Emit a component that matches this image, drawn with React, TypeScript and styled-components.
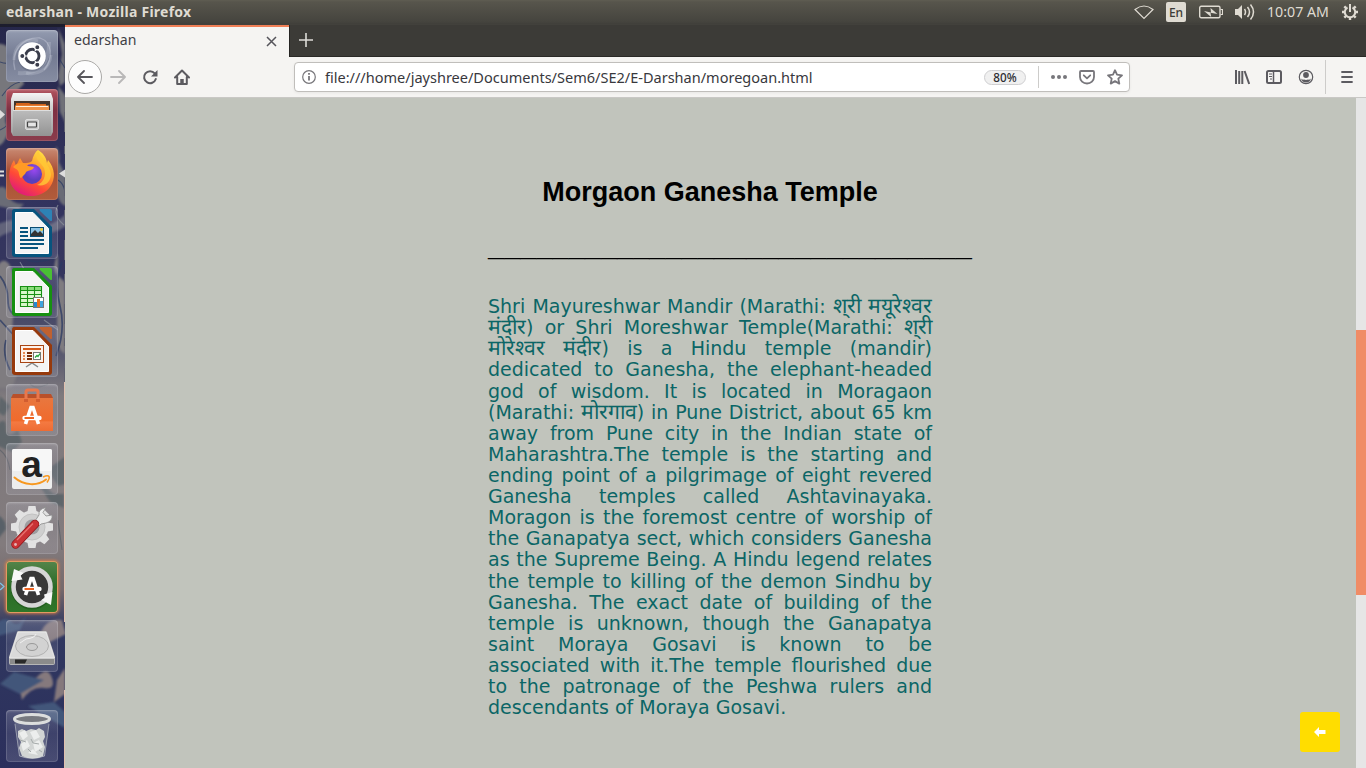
import React from "react";
import styled, { createGlobalStyle } from "styled-components";

const Global = createGlobalStyle`
  html, body { margin: 0; padding: 0; }
  body { width: 1366px; height: 768px; overflow: hidden; }
  * { box-sizing: border-box; }
  svg { display: block; flex: none; }
`;

const ui = `"Noto Sans", "Open Sans", sans-serif`;

const Desktop = styled.div`
  width: 1366px;
  height: 768px;
  display: flex;
  flex-direction: column;
  overflow: hidden;
  font-family: ${ui};
`;
const TopPanel = styled.header`
  height: 24px;
  flex: none;
  display: flex;
  align-items: center;
  justify-content: space-between;
  padding: 0 7px 0 6px;
  background: linear-gradient(#5f5d52 0, #57554c 2px, #45443e 22px, #403f3a 24px);
  color: #dfdbd2;
`;
const WindowTitle = styled.div`
  font-size: 14px;
  font-weight: 700;
  letter-spacing: 0.26px;
  line-height: 24px;
  white-space: nowrap;
`;
const Indicators = styled.div`
  display: flex;
  align-items: center;
  height: 24px;
`;
const Indicator = styled.div<{ $gap: number }>`
  margin-left: ${(p) => p.$gap}px;
`;
const LanguageBadge = styled.div`
  width: 20px;
  height: 20px;
  margin-left: 12px;
  border-radius: 2px;
  background: #dfdbd2;
  color: #3c3b37;
  font-size: 12px;
  font-weight: 500;
  line-height: 21px;
  text-align: center;
`;
const Clock = styled.div`
  width: 63px;
  margin-left: 12px;
  font-size: 14.2px;
  line-height: 24px;
  white-space: nowrap;
`;
const Workspace = styled.div`
  flex: 1;
  display: flex;
  min-height: 0;
`;
const Launcher = styled.nav`
  position: relative;
  width: 65px;
  flex: none;
  background: #2f3056;
  overflow: hidden;
`;
const Wallpaper = styled.svg`
  position: absolute;
  left: 0;
  top: 0;
`;
const Dock = styled.div`
  position: relative;
  height: 744px;
  padding: 6px 7px 6px 6px;
  display: flex;
  flex-direction: column;
  gap: 7px;
`;
const Tile = styled.div<{ $bg: string; $active?: boolean; $last?: boolean }>`
  width: 52px;
  height: 52px;
  flex: none;
  border-radius: 4px;
  background: ${(p) => p.$bg};
  box-shadow: ${(p) =>
    p.$active
      ? "inset 0 0 0 1px #e39a62, 0 0 3px 1px rgba(233,130,70,.75)"
      : "inset 0 0 0 1px rgba(255,255,255,.13), inset 0 2px 2px rgba(255,255,255,.13)"};
  margin-top: ${(p) => (p.$last ? "auto" : "0")};
`;
const Browser = styled.main`
  flex: 1;
  min-width: 0;
  display: flex;
  flex-direction: column;
`;
const TabStrip = styled.div`
  height: 33px;
  flex: none;
  display: flex;
  background: #3c3b37;
  border-top: 1px solid #42413c;
  box-shadow: inset 0 -1px 0 #2a2926;
`;
const Tab = styled.div`
  width: 224px;
  height: 32px;
  display: flex;
  align-items: center;
  justify-content: space-between;
  padding: 0 12px 2px 9px;
  border-top: 2px solid #f07f56;
  background: #f5f4f2;
  color: #3f3f45;
  font-size: 14.1px;
`;
const TabTitle = styled.span`
  line-height: 20px;
  padding-bottom: 2px;
`;
const NewTab = styled.div`
  width: 34px;
  padding: 0 0 2px 9px;
  border-left: 1px solid #252422;
  display: flex;
  align-items: center;
`;
const NavBar = styled.div`
  height: 41px;
  flex: none;
  display: flex;
  align-items: center;
  background: #f5f4f2;
  border-bottom: 1px solid #c9c8c5;
  padding: 0 0 0 3px;
`;
const BackButton = styled.div`
  width: 34px;
  height: 34px;
  flex: none;
  border: 1px solid #aaa9a7;
  border-radius: 50%;
  background: #fdfdfd;
  display: flex;
  align-items: center;
  justify-content: center;
`;
const ToolIcon = styled.div<{ $gap: number }>`
  flex: none;
  margin-left: ${(p) => p.$gap}px;
  width: 16px;
  height: 16px;
`;
const AddressBar = styled.div`
  width: 836px;
  height: 30px;
  flex: none;
  margin-left: 104px;
  padding: 0 6px 0 6px;
  display: flex;
  align-items: center;
  background: #fff;
  border: 1px solid #c0bebb;
  border-radius: 4px;
  box-shadow: 0 1px 3px rgba(0, 0, 0, 0.06);
`;
const Url = styled.div`
  margin-left: 8px;
  flex: 1;
  font-size: 14.53px;
  line-height: 28px;
  color: #38383d;
  white-space: nowrap;
`;
const ZoomChip = styled.div`
  width: 42px;
  height: 15px;
  border: 1px solid #cfcfd1;
  border-radius: 8px;
  background: #f0f0f0;
  font-size: 11.7px;
  font-weight: 500;
  line-height: 13px;
  text-align: center;
  color: #2c2c30;
`;
const Divider = styled.div<{ $h: number; $gap: number }>`
  width: 1px;
  flex: none;
  height: ${(p) => p.$h}px;
  margin-left: ${(p) => p.$gap}px;
  background: #cdccca;
`;
const Viewport = styled.div`
  flex: 1;
  min-height: 0;
  display: flex;
`;
const Page = styled.section`
  position: relative;
  flex: 1;
  background: #c1c4bc;
  padding: 78px 1px 0 0;
  display: flex;
  flex-direction: column;
  align-items: center;
`;
const Heading = styled.h1`
  margin: 0;
  font: 700 27px/32px "Liberation Sans", Arial, sans-serif;
  color: #000;
`;
const Column = styled.div`
  width: 444px;
`;
const Rule = styled.div`
  margin-top: 19px;
  height: 33px;
  font: 32.26px/33px "Liberation Serif", "Times New Roman", serif;
  color: #000;
  white-space: nowrap;
  transform: translateY(0.6px) scaleY(0.75);
  transform-origin: 0 31px;
`;
const Article = styled.div`
  margin-top: 36.12px;
  font: 19px/21.12px "DejaVu Sans", sans-serif;
  color: #0b6666;
`;
const Line = styled.div<{ $end?: boolean }>`
  height: 21.12px;
  white-space: nowrap;
  text-align: ${(p) => (p.$end ? "left" : "justify")};
  text-align-last: ${(p) => (p.$end ? "left" : "justify")};
`;
const Marathi = styled.span`
  font-size: 21.2px;
  font-weight: 300;
  line-height: 0;
`;
const BackToTop = styled.div`
  position: absolute;
  right: 16px;
  bottom: 16px;
  width: 40px;
  height: 40px;
  border-radius: 3px;
  background: #fd0;
  display: flex;
  align-items: center;
  justify-content: center;
`;
const ScrollTrack = styled.div`
  width: 10px;
  background: #e6e6e6;
  padding-top: 232px;
`;
const ScrollThumb = styled.div`
  height: 265px;
  background: #f08c66;
`;

const lines = [
  "Shri Mayureshwar Mandir (Marathi: श्‌री मयूरेश्‍वर",
  "मंदीर) or Shri Moreshwar Temple(Marathi: श्‌री",
  "मोरेश्‍वर मंदीर) is a Hindu temple (mandir)",
  "dedicated to Ganesha, the elephant-headed",
  "god of wisdom. It is located in Moragaon",
  "(Marathi: मोरगाव) in Pune District, about 65 km",
  "away from Pune city in the Indian state of",
  "Maharashtra.The temple is the starting and",
  "ending point of a pilgrimage of eight revered",
  "Ganesha temples called Ashtavinayaka.",
  "Moragon is the foremost centre of worship of",
  "the Ganapatya sect, which considers Ganesha",
  "as the Supreme Being. A Hindu legend relates",
  "the temple to killing of the demon Sindhu by",
  "Ganesha. The exact date of building of the",
  "temple is unknown, though the Ganapatya",
  "saint Moraya Gosavi is known to be",
  "associated with it.The temple flourished due",
  "to the patronage of the Peshwa rulers and",
  "descendants of Moraya Gosavi.",
];

const withMarathi = (text: string) =>
  text
    .split(/([\u0900-\u097F\u200C\u200D]+)/)
    .map((part, i) => (i % 2 ? <Marathi key={i}>{part}</Marathi> : part));

const Art = ({ children }: { children: React.ReactNode }) => (
  <svg width="52" height="52" viewBox="0 0 52 52">{children}</svg>
);

const Ubuntu = () => (
  <Art>
    <g fill="none" stroke="#dfe4ee" strokeOpacity=".32" strokeWidth="1.3">
      <path d="M9 40C4 22 16 7 34 8C46 12 48 28 38 40" />
      <path d="M43 12C44 34 30 45 12 43" strokeOpacity=".2" strokeWidth="4" />
      <path d="M8 30C8 15 20 7 32 11M45 25C44 40 30 46 20 43" strokeOpacity=".22" strokeWidth="3" />
    </g>
    <circle cx="26" cy="27.500" r="14" fill="#555c70" opacity=".4" />
    <circle cx="26" cy="26" r="13.8" fill="#fff" />
    <circle cx="26.3" cy="26" r="6.700" fill="none" stroke="#3a3d4b" strokeWidth="2.900" />
    <g stroke="#fff" strokeWidth="1.2" fill="#3a3d4b">
      <path d="M18 26h4M31.500 17l-2.500 4M31.500 35L29 31" />
      <circle cx="16.300" cy="26" r="2.600" /><circle cx="31.300" cy="17.2" r="2.600" /><circle cx="31.300" cy="34.8" r="2.600" />
    </g>
  </Art>
);
const Files = () => (
  <Art>
    <defs>
      <linearGradient id="cab" x2="0" y2="1"><stop stopColor="#bcbcbc" /><stop offset=".3" stopColor="#b0b0b0" /><stop offset="1" stopColor="#939393" /></linearGradient>
      <linearGradient id="cabTop" x2="0" y2="1"><stop stopColor="#f4f4f4" /><stop offset=".3" stopColor="#d2d2d2" /><stop offset="1" stopColor="#9c9c9c" /></linearGradient>
    </defs>
    <path d="M7 4h38l2 6v33l-2 4H7l-2-4V10z" fill="url(#cabTop)" />
    <path d="M8 12h36v10H8z" fill="#43352c" />
    <path d="M10 14h13l2 1h15v6H10z" fill="#d5641b" />
    <path d="M9 16.500h34V21H9z" fill="#f0954a" />
    <path d="M10 17.500h32" stroke="#fff3e0" strokeWidth="1" />
    <path d="M7 21h38v26H7z" fill="url(#cab)" />
    <path d="M7 21.500h38" stroke="#dedede" />
    <rect x="19.500" y="30.500" width="13" height="10" rx="1.5" fill="#c8c8c8" stroke="#dedede" />
    <rect x="21.5" y="33" width="9" height="5" rx=".5" fill="#e5e5e5" stroke="#444" strokeWidth="1.2" />
  </Art>
);
const Firefox = () => (
  <Art>
    <defs>
      <linearGradient id="ff" x1=".85" y1="0" x2=".3" y2="1"><stop stopColor="#fff04a" /><stop offset=".38" stopColor="#ffa02c" /><stop offset=".7" stopColor="#ff4a36" /><stop offset="1" stopColor="#e0187d" /></linearGradient>
      <radialGradient id="fp" cx=".6" cy=".3"><stop stopColor="#9a48f0" /><stop offset="1" stopColor="#5b3fbc" /></radialGradient>
    </defs>
    <path d="M32 2C37 5 40 9 41 15L42 12C49 20 50 31 44 39C36 50 19 51 9 42C1 34 2 21 8 12L10 18L14 10L17 15C21 15 24 15 26 13C27 8 29 4 32 2Z" fill="url(#ff)" />
    <circle cx="26" cy="26" r="10" fill="url(#fp)" />
    <path d="M7 19C13 13 19 14 22 18L28 19C27 23 22 22 20 24C20 25 18 27 16 29C15 31 14 30 13 26C13 22 10 21 7 19Z" fill="#ff9b25" />
    <path d="M32 3C27 11 35 14 38 20C41 28 37 35 31 37C40 39 45 33 45 26C44 17 38 15 32 3Z" fill="#ffc936" opacity=".8" />
  </Art>
);
const Sheet = ({ dark, light, children }: { dark: string; light: string; children: React.ReactNode }) => (
  <Art>
    <path d="M8 2H28L46 20V47q0 3-3 3H9q-3 0-3-3V5q0-3 2-3z" fill={dark} />
    <path d="M34 2H44q2 0 2 2V13.500q-1 1-2 0L34 4q-1-1 0-2z" fill={light} />
    <path d="M9.500 5.500H27L42.500 21.500V46.500H9.500z" fill="#f4f4f4" stroke="#fff" strokeWidth="1" />
    {children}
  </Art>
);
const Writer = () => (
  <Sheet dark="#07547e" light="#2d82b5">
    <path d="M14 21h8M14 25h8M14 29h8M14 33h24M14 37h24M14 41h18" stroke="#07547e" strokeWidth="2" />
    <rect x="24.500" y="20.500" width="13" height="9" fill="#8cc4e5" stroke="#0a4d73" />
    <path d="M25 29v-2l4-4 3 3 2-2 3 3v2z" fill="#333" /><circle cx="35.500" cy="22.5" r="1.4" fill="#f3cc35" />
  </Sheet>
);
const Calc = () => (
  <Sheet dark="#169011" light="#49bf34">
    <rect x="14" y="20" width="22" height="21" fill="#d9f8cc" />
    <path d="M14 20h22v4H14z" fill="#8cdd7c" />
    <path d="M14.500 20.500h21v20h-21zM14 24.500h22M14 28.500h22M14 32.500h22M14 36.500h22M21.500 20v21M28.500 20v21" fill="none" stroke="#189014" strokeWidth="1.1" />
    <rect x="27.500" y="31.500" width="10" height="10" fill="#fff" stroke="#777" />
    <path d="M28 36h3v5h-3z" fill="#248bd0" /><path d="M31 33h3v8h-3z" fill="#e8721d" /><path d="M34 35h3v6h-3z" fill="#3fa3de" />
  </Sheet>
);
const Impress = () => (
  <Sheet dark="#96390c" light="#bf6130">
    <path d="M20 42l6-4 6 4" fill="none" stroke="#888" strokeWidth="1.5" />
    <rect x="14.5" y="20.500" width="23" height="17" fill="#fdf2eb" stroke="#a84514" />
    <path d="M17 24h18" stroke="#d65a18" strokeWidth="2" />
    <path d="M17 28h2M17 31h2M17 34h2" stroke="#e78a54" strokeWidth="2" />
    <path d="M21 28h5M21 31h5M21 34h5" stroke="#7a2d08" strokeWidth="2" />
    <rect x="27.5" y="27.500" width="7" height="7" fill="#fff" stroke="#777" />
    <path d="M29 32.500l2-2 1 1 2-3" stroke="#24a33b" strokeWidth="1.3" fill="none" />
  </Sheet>
);
const LetterMark = () => (
  <g fill="none" stroke="#fff">
    <path d="M19.500 40L25 23.500H27L32.500 40" strokeWidth="3.600" />
    <path d="M18.500 34H33.500" strokeWidth="4.400" strokeLinecap="round" />
    <path d="M18.500 34H28" stroke="#ef5c16" strokeWidth="1.900" />
  </g>
);
const Software = () => (
  <Art>
    <defs><linearGradient id="bag" x2="0" y2="1"><stop stopColor="#e8773f" /><stop offset=".7" stopColor="#f06a2c" /><stop offset=".72" stopColor="#f47a42" /><stop offset="1" stopColor="#ee6c33" /></linearGradient></defs>
    <path d="M7 10h38l2 4H5z" fill="#b9502a" />
    <path d="M5 14h42v33H5z" fill="url(#bag)" />
    <path d="M20 17V8q0-2 2-2h8q2 0 2 2v9" fill="none" stroke="#e9774b" strokeWidth="3" />
    <path d="M18 15h4v3h-4zM30 15h4v3h-4z" fill="#d25d30" />
    <LetterMark />
  </Art>
);
const Amazon = () => (
  <Art>
    <rect x="6" y="6" width="40" height="40" rx="2" fill="#ededed" />
    <rect x="6" y="6" width="40" height="22" rx="2" fill="#f7f7f7" />
    <text x="25.500" y="34" textAnchor="middle" fontFamily="Liberation Sans" fontWeight="700" fontSize="37" fill="#222">a</text>
    <path d="M8.500 34.500C18 43 32 43 40 36.500" fill="none" stroke="#f79820" strokeWidth="2" strokeLinecap="round" />
    <path d="M37 34q5-2 6-.5t-2 6" fill="none" stroke="#f79820" strokeWidth="1.6" />
  </Art>
);
const teeth = [0, 45, 90, 135, 180, 225, 270, 315];
const Settings = () => (
  <Art>
    <g fill="#e2e2e2">
      {teeth.map((a) => (
        <path key={a} d="M21 12L22.500 4h7L31 12z" transform={`rotate(${a} 26 25)`} />
      ))}
      <circle cx="26" cy="25" r="16.500" />
    </g>
    <circle cx="26" cy="25" r="13" fill="#cfcfcf" stroke="#c2c2c2" /><circle cx="26" cy="25" r="7.500" fill="#9d9da0" />
    <path d="M29 19L33 13q-1-6 7-7.500l-3 5 3 3.500 6-1q1 6-6 8l-5 1-4 4z" fill="#ececec" stroke="#8b8b8b" strokeWidth=".8" />
    <path d="M9.500 42.500L29 22" stroke="#8d171b" strokeWidth="8.500" strokeLinecap="round" />
    <path d="M9.500 42.500L29 22" stroke="#c93235" strokeWidth="7" strokeLinecap="round" />
    <path d="M11 38L27 21.500" stroke="#e8716f" strokeWidth="1.3" /><circle cx="9.500" cy="42.500" r="1.4" fill="#e4b4b4" />
  </Art>
);
const Updater = () => (
  <Art>
    <circle cx="26" cy="27.500" r="21" fill="#0f3a0d" opacity=".35" />
    <circle cx="26" cy="26" r="18.500" fill="#383838" stroke="#d6d6d6" strokeWidth="4.600" />
    <path d="M5.500 20L8 8l9.500 4-3 2.500 2 4z" fill="#f8f8f8" />
    <path d="M46.500 31l-1.500 13-9.500-5 3.500-2-1-3.500z" fill="#f8f8f8" />
    <g transform="translate(0,-6)"><LetterMark /></g>
  </Art>
);
const Disk = () => (
  <Art>
    <path d="M11 12q0-1 2-1h26q2 0 2 1l8 25v6q0 2-2 2H5q-2 0-2-2v-6z" fill="#b6b6b6" />
    <path d="M12 12h28l8.500 26h-45z" fill="#dadada" stroke="#f0f0f0" strokeWidth=".7" />
    <path d="M4 39h44v5H4z" fill="#8b8b8b" /><path d="M9 39.500h12l-2 4H9z" fill="#292929" />
    <ellipse cx="26" cy="26" rx="16.500" ry="10.500" fill="#d2d2d2" stroke="#b2b2b2" />
    <ellipse cx="26" cy="27" rx="5.5" ry="3.5" fill="#cdcdcd" stroke="#999" />
    <path d="M30 14q-1 4-10 5l-6 4" fill="none" stroke="#f2f2f2" />
  </Art>
);
const Trash = () => (
  <Art>
    <path d="M8 9L13 46q13 5 26 0L44 9z" fill="#c8ced2" opacity=".22" />
    <path d="M12 21l4-2 4 2 5-2 5 1 3-2 5 3 1 6-2 4 2 6-2 9q-10 5-21 0l-3-8 2-6-3-5z" fill="#d2d5d4" />
    <path d="M13 23l6-3 3 6-5 4zM24 22l6-2 4 7-6 3zM15 34l6-4 3 6-7 5zM27 33l6-3 4 7-8 5zM22 43l5-4 5 6z" fill="#f1f2f1" opacity=".85" />
    <path d="M14 30l6 2M25 29l2 4 6 1M22 39l3 3M33 40l3 2" fill="none" stroke="#9da3a3" strokeWidth=".9" />
    <ellipse cx="26" cy="9" rx="17.500" ry="4.500" fill="#77797f" stroke="#dcdedd" strokeWidth="3" />
    <path d="M9 14l4.500 32M43 14l-4.500 32" stroke="#dce0e1" strokeOpacity=".45" />
    <path d="M13.500 46q12.500 4.500 25 0" fill="none" stroke="#dce0e1" strokeOpacity=".6" />
  </Art>
);

const WallpaperArt = () => (
  <Wallpaper width="65" height="744" viewBox="0 24 65 744">
    <defs>
      <linearGradient id="wp" x1="0" y1="24" x2="0" y2="768" gradientUnits="userSpaceOnUse">
        <stop stopColor="#26274a" /><stop offset=".22" stopColor="#32335e" /><stop offset=".34" stopColor="#35365e" />
        <stop offset=".45" stopColor="#5c5c70" /><stop offset=".5" stopColor="#7f7a7d" /><stop offset=".7" stopColor="#827b7d" />
        <stop offset=".76" stopColor="#75696c" /><stop offset=".81" stopColor="#303860" /><stop offset="1" stopColor="#2b2f5c" />
      </linearGradient>
      <filter id="soft" x="-20%" y="-5%" width="140%" height="110%"><feGaussianBlur stdDeviation="1.2" /></filter>
    </defs>
    <path d="M0 24h65v744H0z" fill="url(#wp)" />
    <g filter="url(#soft)">
      <path d="M-3 44Q8 42 14 56T24 84Q14 92 8 108T10 128Q4 146-3 146Z" fill="#77777b" />
      <path d="M58 28l4 26-4 22 2 10 5-4V44zM58 86l8 10v28l-6-12z" fill="#6f7178" />
      <path d="M56 146q5 8 3 16l7 14v30q-8-2-10-18zM-2 188q8-4 10 6t16 10l-6 6-20-4z" fill="#6b6c76" />
      <path d="M-2 224q20-8 34 0t34-10v12q-18 12-34 6t-34 6z" fill="#62647a" />
      <path d="M-3 268q4-10 10-6t8 28l-3 42q8 10 10 30l-10 26h-15zM58 254q-6 12-2 20l9 8v72q-10-6-8-26z" fill="#7f7c80" />
      <path d="M-2 424q8-8 8 4t12 2l4 12-10 10-14-6zM0 396l10 10-6 10-6-4zM52 466l14-10v28l-8 2-8-12zM36 480l18 14 10 0v14l-14-6z" fill="#566067" opacity=".8" />
      <path d="M-2 515q8 4 8 14l-8 10z" fill="#596068" />
      <path d="M62 620q-14-2-20 10t-18 14-10 14l12-6 16-6 24-12zM22 700q10-14 22-12t8-10-14-2-18 14zM65 668l-8 12-3 22 11-8z" fill="#85797d" />
      <path d="M-2 622q8-6 14 0t14-6l-6 14-22 6zM28 706l26-4 11 10v16l-20-12zM0 684l14-12 30 8-24 14z" fill="#43577a" />
    </g>
    <g fill="none" stroke="#2a3a63" strokeWidth="1.1" strokeOpacity=".75">
      <path d="M0 62q10 4 22-4M2 96q8-12 18-14M0 130q10-4 12-16M60 60l5 8M58 180q6 4 7 12" />
      <path d="M0 276q8 10 8 24t10 16M6 340q-4 14 4 30M62 262q-8 20-2 44t-4 50M0 320l18 20M24 256q6 10 30 2" strokeWidth="1.7" />
      <path d="M58 205q-6 10 6 20M20 262l8 14M44 320l14 10" stroke="#8a8f9a" />
      <path d="M30 384q6 6 18 0M0 450q8 6 10 20M58 520l4 30" stroke="#5d626a" />
    </g>
    <path d="M64.500 112v270" stroke="#5f606f" strokeDasharray="20 14 8 22" />
    <path d="M64.5 382v240M64.500 690v78" stroke="#e0bfae" />
    <path d="M0 24h65v3H0z" fill="#1c1c26" opacity=".8" />
    <path d="M0 110l5 4.5-5 4.5z" fill="#ddd" />
    <path d="M65 169.500l-6 4 6 4z" fill="#ddd" />
    <path d="M0 171.500h4M0 175.500h4" stroke="#ddd" strokeWidth="2" />
    <path d="M0 583l4 3.500-4 3.500" fill="none" stroke="#7cc6ee" strokeWidth="1.300" />
  </Wallpaper>
);

const glass = "linear-gradient(rgba(200,200,215,.24), rgba(170,170,190,.14) 45%, rgba(190,190,205,.2))";

const App = () => (
  <Desktop>
    <Global />
    <TopPanel>
      <WindowTitle>edarshan - Mozilla Firefox</WindowTitle>
      <Indicators>
        <svg width="20" height="16" viewBox="0 0 20 16" fill="none" stroke="#dfdbd2" strokeWidth="1.2"><path d="M1 5.500Q10-1.500 19 5.500L10 14.500Z" /></svg>
        <LanguageBadge>En</LanguageBadge>
        <Indicator $gap={13}>
          <svg width="24" height="14" viewBox="0 0 24 14"><rect x=".7" y="1.200" width="20.300" height="11.600" rx="1.500" fill="none" stroke="#dfdbd2" strokeWidth="1.400" /><path d="M21.500 4.500h2v5h-2" fill="none" stroke="#dfdbd2" strokeWidth="1.200" /><path d="M5 6l7 1.500-.5-4.500 7 6-7-1.200.7 4.200z" fill="#dfdbd2" /></svg>
        </Indicator>
        <Indicator $gap={12}>
          <svg width="20" height="18" viewBox="0 0 20 18" fill="none" stroke="#dfdbd2" strokeWidth="1.500"><path d="M0 6h3l4-4v14l-4-4H0z" fill="#dfdbd2" stroke="none" /><path d="M9.500 6q2 3 0 6M12.500 4q4 5 0 10M15.500 1.500q6 7.500 0 15" /></svg>
        </Indicator>
        <Clock>10:07 AM</Clock>
        <Indicator $gap={11}>
          <svg width="18" height="18" viewBox="0 0 18 18" fill="none" stroke="#dfdbd2"><path d="M6.500 4.500a5.200 5.200 0 1 0 5 0" strokeWidth="2" /><path d="M9 1v8" strokeWidth="2" /><path d="M1 9h2.500M14.500 9H17M3.300 3.300l1.700 1.700M14.700 3.300L13 5M3.300 14.700L5 13M14.700 14.700L13 13M9 14.500V17" strokeWidth="2.400" /></svg>
        </Indicator>
      </Indicators>
    </TopPanel>
    <Workspace>
      <Launcher>
        <WallpaperArt />
        <Dock>
          <Tile $bg="linear-gradient(#939bb0,#747b92 50%,#868da2)"><Ubuntu /></Tile>
          <Tile $bg="linear-gradient(#b35560,#7e2f42 40%,#8b3c4c)"><Files /></Tile>
          <Tile $bg="linear-gradient(#c98a72,#a94e35 45%,#b15c3b)"><Firefox /></Tile>
          <Tile $bg={glass}><Writer /></Tile>
          <Tile $bg={glass}><Calc /></Tile>
          <Tile $bg={glass}><Impress /></Tile>
          <Tile $bg={glass}><Software /></Tile>
          <Tile $bg={glass}><Amazon /></Tile>
          <Tile $bg={glass}><Settings /></Tile>
          <Tile $bg="linear-gradient(#55854b,#2b6a26 50%,#2f772a)" $active><Updater /></Tile>
          <Tile $bg={glass}><Disk /></Tile>
          <Tile $bg={glass} $last><Trash /></Tile>
        </Dock>
      </Launcher>
      <Browser>
        <TabStrip>
          <Tab>
            <TabTitle>edarshan</TabTitle>
            <svg width="11" height="11" viewBox="0 0 11 11" stroke="#55545a" strokeWidth="1.500"><path d="M1 1l9 9M10 1L1 10" /></svg>
          </Tab>
          <NewTab>
            <svg width="14" height="14" viewBox="0 0 14 14" stroke="#dddcd8" strokeWidth="1.600"><path d="M7 0v14M0 7h14" /></svg>
          </NewTab>
        </TabStrip>
        <NavBar>
          <BackButton>
            <svg width="16" height="16" viewBox="0 0 16 16" fill="none" stroke="#58575c" strokeWidth="1.800" strokeLinecap="round" strokeLinejoin="round"><path d="M15 8H1.500M7 2L1 8l6 6" /></svg>
          </BackButton>
          <ToolIcon $gap={8}><svg width="16" height="16" viewBox="0 0 16 16" fill="none" stroke="#b9b8b8" strokeWidth="1.800" strokeLinecap="round" strokeLinejoin="round"><path d="M1 8h13.500M9 2l6 6-6 6" /></svg></ToolIcon>
          <ToolIcon $gap={16}><svg width="16" height="16" viewBox="0 0 16 16"><path d="M12.700 4.300A6 6 0 1 0 13.800 10" fill="none" stroke="#5c5b60" strokeWidth="2" strokeLinecap="round" /><path d="M15.500 1v6.500H9z" fill="#5c5b60" /></svg></ToolIcon>
          <ToolIcon $gap={16}><svg width="16" height="16" viewBox="0 0 16 16" fill="none" stroke="#5c5b60" strokeWidth="2" strokeLinejoin="round" strokeLinecap="round"><path d="M1 8.500L8 1.500l7 7M3.200 8v7h9.600V8" /><path d="M8 10v5" strokeWidth="3.500" strokeLinecap="butt" /></svg></ToolIcon>
          <AddressBar>
            <svg width="16" height="16" viewBox="0 0 16 16"><circle cx="8" cy="8" r="6.300" fill="none" stroke="#77767a" strokeWidth="1.200" /><path d="M8 7v4.500M8 4v1.700" stroke="#66656a" strokeWidth="1.600" /></svg>
            <Url>file:///home/jayshree/Documents/Sem6/SE2/E-Darshan/moregoan.html</Url>
            <ZoomChip>80%</ZoomChip>
            <Divider $h={22} $gap={12} />
            <ToolIcon $gap={12}><svg width="16" height="16" viewBox="0 0 16 16" fill="#77767b"><circle cx="2" cy="8" r="2" /><circle cx="8" cy="8" r="2" /><circle cx="14" cy="8" r="2" /></svg></ToolIcon>
            <ToolIcon $gap={12}><svg width="16" height="16" viewBox="0 0 16 16" fill="none" stroke="#77767b" strokeWidth="1.800" strokeLinecap="round" strokeLinejoin="round"><path d="M2 2h12q1 0 1 1v5a7 6.500 0 0 1-14 0V3q0-1 1-1zM4.800 6.300L8 9.300l3.200-3" /></svg></ToolIcon>
            <ToolIcon $gap={12}><svg width="16" height="16" viewBox="0 0 16 16" fill="none" stroke="#77767b" strokeWidth="1.800" strokeLinejoin="round"><path d="M8 1.200l2 4.500 5 .6-3.700 3.300 1 5L8 12.100l-4.300 2.500 1-5L1 6.300l5-.6z" /></svg></ToolIcon>
          </AddressBar>
          <ToolIcon $gap={104}><svg width="16" height="16" viewBox="0 0 16 16" fill="none" stroke="#5c5b60" strokeWidth="2"><path d="M2 1v14M5.200 2v13M8.300 2v13M10.600 2L15.200 15" /></svg></ToolIcon>
          <ToolIcon $gap={16}><svg width="16" height="16" viewBox="0 0 16 16" fill="none" stroke="#5c5b60"><rect x="1" y="2" width="14" height="12" rx="1.500" strokeWidth="2" /><path d="M7.500 2v12" strokeWidth="1.500" /><path d="M3 5h3M3 7.500h3M4 10h2" /></svg></ToolIcon>
          <ToolIcon $gap={16}><svg width="16" height="16" viewBox="0 0 16 16"><circle cx="8" cy="8" r="6.700" fill="none" stroke="#5c5b60" strokeWidth="1.200" /><circle cx="8" cy="6" r="2.900" fill="#5c5b60" /><path d="M3 9.500q1 1.500 3 1 2 .8 4 0 2 .5 3-1-1 4-5 4t-5-4z" fill="#5c5b60" /></svg></ToolIcon>
          <Divider $h={34} $gap={11} />
          <ToolIcon $gap={13}><svg width="16" height="16" viewBox="0 0 16 16" stroke="#5c5b60" strokeWidth="1.800" strokeLinecap="round"><path d="M3 3h10M3 8h10M3 13h10" /></svg></ToolIcon>
        </NavBar>
        <Viewport>
          <Page>
            <Heading>Morgaon Ganesha Temple</Heading>
            <Column>
              <Rule>{"_".repeat(30)}</Rule>
              <Article>
                {lines.map((text, i) => (
                  <Line key={i} $end={i === lines.length - 1}>{withMarathi(text)}</Line>
                ))}
              </Article>
            </Column>
            <BackToTop>
              <svg width="12" height="10" viewBox="0 0 12 10" fill="#fff"><path d="M0 5l5-5v3h6.500v4H5v3z" /></svg>
            </BackToTop>
          </Page>
          <ScrollTrack><ScrollThumb /></ScrollTrack>
        </Viewport>
      </Browser>
    </Workspace>
  </Desktop>
);

export default App;
